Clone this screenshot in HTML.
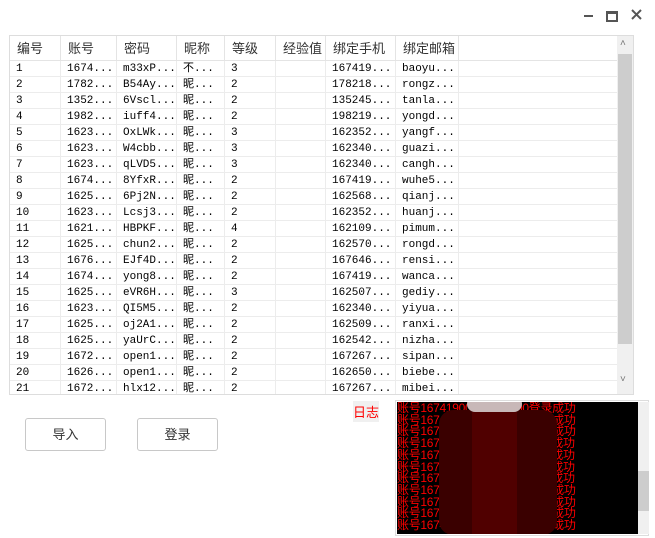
<!DOCTYPE html>
<html><head><meta charset="utf-8"><style>
body{margin:0;width:655px;height:538px;background:#fff;position:relative;overflow:hidden;font-family:"Liberation Sans","Noto Sans CJK SC",sans-serif;}
.a{position:absolute}
#tbl{left:9px;top:35px;width:623px;height:358px;border:1px solid #ddd;overflow:hidden}
.hd{position:absolute;top:0;height:25px;font-size:13px;color:#333;line-height:25px;border-right:1px solid #e4e4e4;border-bottom:1px solid #e4e4e4;padding-left:7px;box-sizing:border-box}
.row{position:absolute;left:0;width:607px;height:16px;border-bottom:1px solid #ececec;box-sizing:border-box}
.c{position:absolute;top:0;height:16px;font-family:"Liberation Mono","Noto Sans CJK SC",monospace;font-size:11px;line-height:16px;color:#000;border-right:1px solid #ececec;box-sizing:border-box;padding-left:6px;white-space:nowrap;overflow:hidden}
.btn{position:absolute;top:418px;width:79px;height:31px;border:1px solid #c8c8c8;border-radius:3px;font-size:13px;text-align:center;line-height:31px;color:#333;background:#fff}
#log{left:395px;top:400px;width:254px;height:136px;border:1px solid #ddd;box-sizing:border-box;background:#fff}
#blk{position:absolute;left:1px;top:1px;width:241px;height:132px;background:#000;overflow:hidden}
.l{color:#f00;font-size:12px;line-height:11.7px;font-family:"Liberation Sans","Noto Sans CJK SC",sans-serif;white-space:nowrap;letter-spacing:-0.3px}
</style></head><body>
<div class="a" style="left:584px;top:15px;width:9px;height:2px;background:#555"></div>
<div class="a" style="left:606px;top:11px;width:8px;height:6px;border:2px solid #555;border-top-width:3px"></div>
<svg class="a" style="left:631px;top:9px" width="11" height="11"><path d="M1 1L10 10M10 1L1 10" stroke="#555" stroke-width="2"/></svg>
<div id="tbl" class="a">
<div class="hd" style="left:0;width:51px">编号</div>
<div class="hd" style="left:51px;width:56px">账号</div>
<div class="hd" style="left:107px;width:60px">密码</div>
<div class="hd" style="left:167px;width:48px">昵称</div>
<div class="hd" style="left:215px;width:51px">等级</div>
<div class="hd" style="left:266px;width:50px">经验值</div>
<div class="hd" style="left:316px;width:70px">绑定手机</div>
<div class="hd" style="left:386px;width:63px">绑定邮箱</div>
<div class="hd" style="left:449px;width:158px;border-right:none"></div>
<div id="rows"></div>
<div class="a" style="left:607px;top:0;width:16px;height:358px;background:#f0f0f0"></div>
<div class="a" style="left:608px;top:18px;width:14px;height:290px;background:#cdcdcd"></div>
<div class="a" style="left:610px;top:2px;font-size:10px;color:#777">˄</div>
<div class="a" style="left:610px;top:338px;font-size:10px;color:#777">˅</div>
</div>
<div class="btn" style="left:25px">导入</div>
<div class="btn" style="left:137px">登录</div>
<div class="a" style="left:353px;top:401px;font-size:13px;color:#f00;background:#f0f0f0;padding:1px 0">日志</div>
<div id="log" class="a">
<div id="blk"><div style="padding-top:1px" id="lines"></div>
<div class="a" style="left:42px;top:8px;width:118px;height:125px;background:#3a0000;border-radius:14px"></div>
<div class="a" style="left:75px;top:10px;width:45px;height:123px;background:#500000"></div>
<div class="a" style="left:70px;top:-6px;width:55px;height:16px;background:#c8b8b8;border-radius:8px"></div>
</div>
<div class="a" style="left:242px;top:1px;width:11px;height:132px;background:#f0f0f0"></div>
<div class="a" style="left:242px;top:70px;width:11px;height:40px;background:#cdcdcd"></div>
</div>
<script>
var d=[["1","1674...","m33xP...","不...","3","167419...","baoyu..."],["2","1782...","B54Ay...","昵...","2","178218...","rongz..."],["3","1352...","6Vscl...","昵...","2","135245...","tanla..."],["4","1982...","iuff4...","昵...","2","198219...","yongd..."],["5","1623...","OxLWk...","昵...","3","162352...","yangf..."],["6","1623...","W4cbb...","昵...","3","162340...","guazi..."],["7","1623...","qLVD5...","昵...","3","162340...","cangh..."],["8","1674...","8YfxR...","昵...","2","167419...","wuhe5..."],["9","1625...","6Pj2N...","昵...","2","162568...","qianj..."],["10","1623...","Lcsj3...","昵...","2","162352...","huanj..."],["11","1621...","HBPKF...","昵...","4","162109...","pimum..."],["12","1625...","chun2...","昵...","2","162570...","rongd..."],["13","1676...","EJf4D...","昵...","2","167646...","rensi..."],["14","1674...","yong8...","昵...","2","167419...","wanca..."],["15","1625...","eVR6H...","昵...","3","162507...","gediy..."],["16","1623...","QI5M5...","昵...","2","162340...","yiyua..."],["17","1625...","oj2A1...","昵...","2","162509...","ranxi..."],["18","1625...","yaUrC...","昵...","2","162542...","nizha..."],["19","1672...","open1...","昵...","2","167267...","sipan..."],["20","1626...","open1...","昵...","2","162650...","biebe..."],["21","1672...","hlx12...","昵...","2","167267...","mibei..."]];
var L=[0,51,107,167,215,266,316,386,449],W=[51,56,60,48,51,50,70,63],h="";
d.forEach(function(r,i){h+='<div class="row" style="top:'+(25+i*16)+'px">';for(var j=0;j<8;j++){var t=j<5?r[j]:(j==5?"":r[j-1]);h+='<div class="c" style="left:'+L[j]+'px;width:'+W[j]+'px">'+t+'</div>';}h+='</div>';});
document.getElementById("rows").innerHTML=h;
var s="";for(var i=0;i<11;i++)s+='<div class="l">账号167'+(419000+i*137)+'0715'+(i*31+1000)+'登录成功</div>';
document.getElementById("lines").innerHTML=s;
</script>
</body></html>
